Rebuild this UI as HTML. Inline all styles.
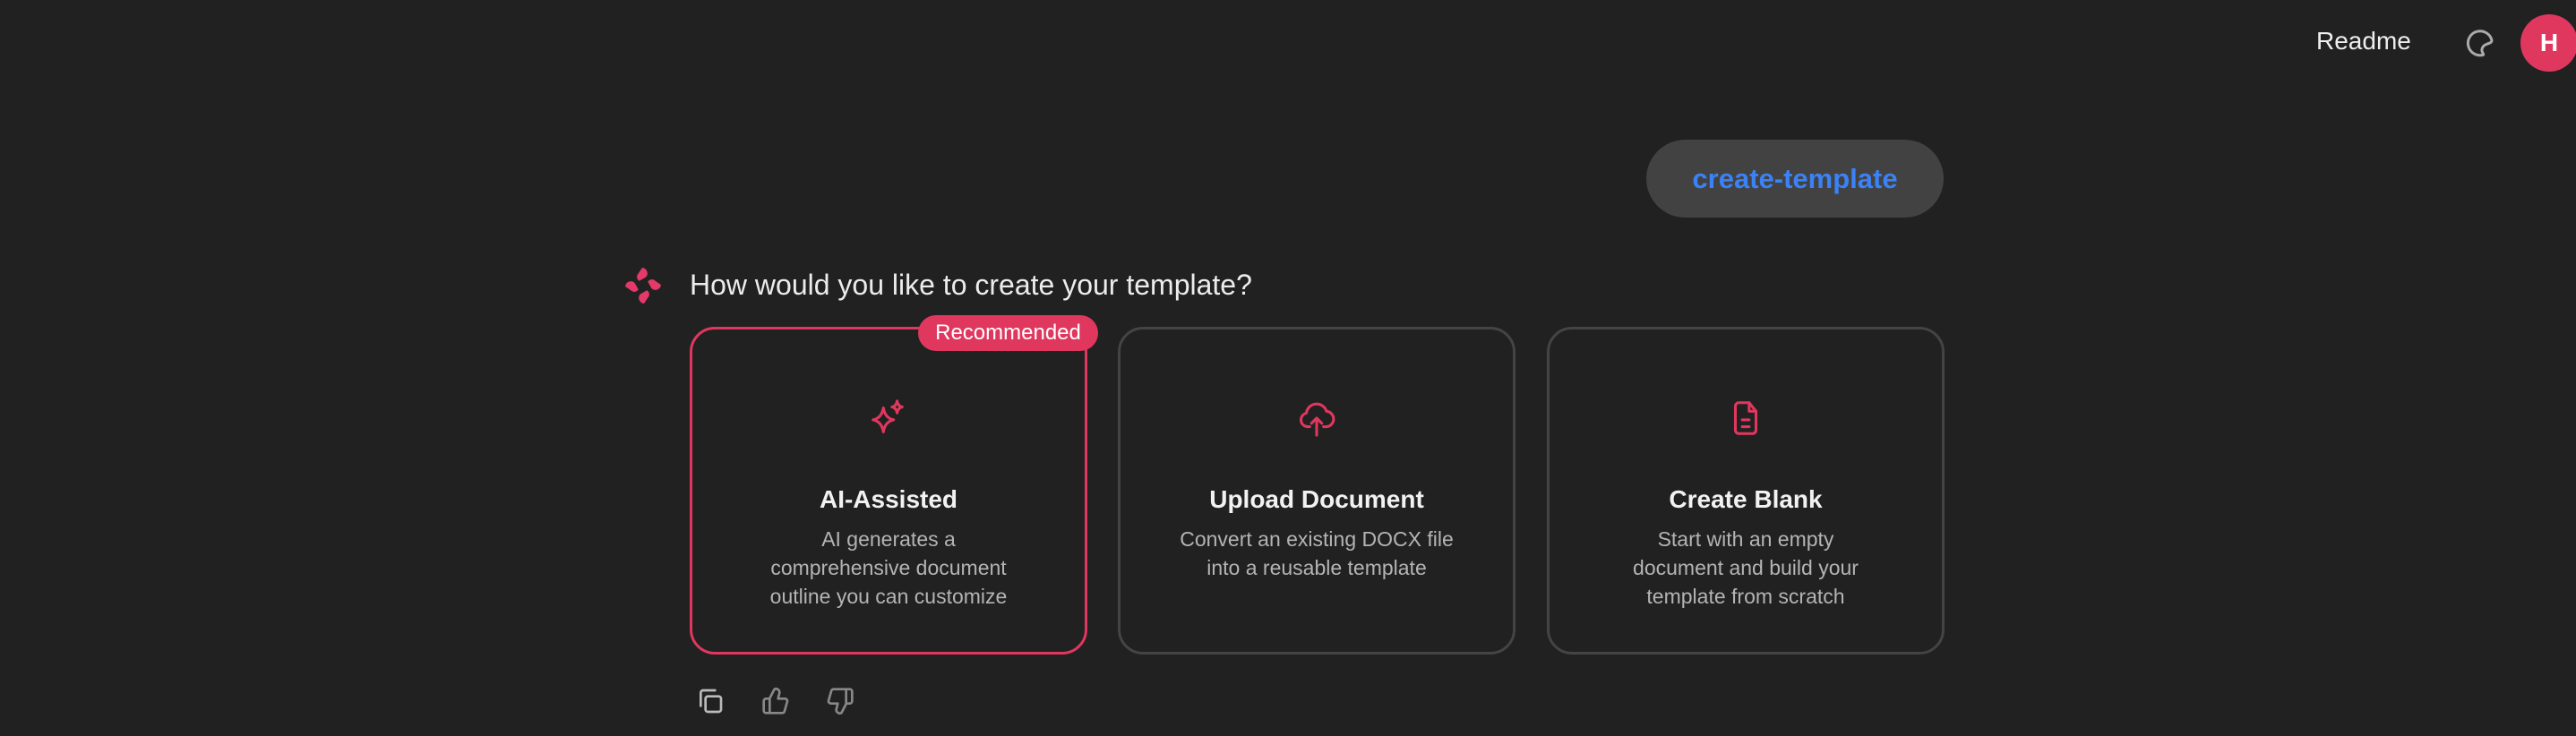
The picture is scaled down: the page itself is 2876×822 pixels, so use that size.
<!DOCTYPE html>
<html><head><meta charset="utf-8"><style>
*{margin:0;padding:0;box-sizing:border-box}
html,body{width:2876px;height:822px;background:#212121;overflow:hidden;font-family:"Liberation Sans",sans-serif;color:#ececec}
.abs{position:absolute}
.pill{left:1838px;top:156px;width:332px;height:87px;border-radius:44px;background:#424242;color:#3b82f6;font-weight:bold;font-size:31px;display:flex;align-items:center;justify-content:center}
.card{top:365px;width:444px;height:366px;border:3px solid #444;border-radius:28px;text-align:center}
.card.sel{border-color:#e0375f}
.card svg{position:absolute;left:50%;top:76px;transform:translateX(-50%)}
.card h3{position:absolute;left:0;right:0;top:174px;font-size:28px;font-weight:bold;color:#f2f2f2}
.card p{position:absolute;left:10px;right:10px;top:218px;font-size:23px;line-height:32px;color:#b4b4b4;white-space:nowrap}
.badge{left:1025px;top:352px;width:201px;height:40px;border-radius:20px;background:#e0375f;color:#fff;font-size:24px;display:flex;align-items:center;justify-content:center}
</style></head><body>
<div class="abs" style="left:2586px;top:30px;font-size:28px;color:#eee">Readme</div>
<svg class="abs" style="left:2752px;top:30px" width="36" height="36" viewBox="0 0 24 24" fill="none" stroke="#aaa" stroke-width="2" stroke-linecap="round" stroke-linejoin="round"><path d="M20 10A9 9 0 1 0 13 21c1 0 1-1 0-2-1-2 0-5 3-6 2-1 4-1 4-3z"/></svg>
<div class="abs" style="left:2814px;top:16px;width:64px;height:64px;border-radius:50%;background:#e0375f;color:#fff;font-weight:bold;font-size:28px;display:flex;align-items:center;justify-content:center">H</div>
<div class="abs pill">create-template</div>
<svg class="abs" style="left:697px;top:298px" width="42" height="42" viewBox="0 0 40 40" fill="#e33a6a"><path d="M19 1a6 6 0 0 1 4 10l-7 4a5 5 0 0 1-1-8z"/><path d="M39 19a6 6 0 0 1-10 4l-4-7a5 5 0 0 1 8-1z"/><path d="M21 39a6 6 0 0 1-4-10l7-4a5 5 0 0 1 1 8z"/><path d="M1 21a6 6 0 0 1 10-4l4 7a5 5 0 0 1-8 1z"/></svg>
<div class="abs" style="left:770px;top:300px;font-size:32px;color:#ececec">How would you like to create your template?</div>
<div class="abs card sel" style="left:770px">
<svg width="46" height="46" viewBox="0 0 24 24" fill="none" stroke="#e0375f" stroke-width="1.6" stroke-linejoin="round"><path d="M9 6Q10 12 15 13Q10 14 9 20Q8 14 3 13Q8 12 9 6Z"/><path d="M17 2Q17.5 5 20 5.5Q17.5 6 17 9Q16.5 6 14 5.5Q16.5 5 17 2Z"/></svg>
<h3>AI-Assisted</h3><p>AI generates a<br>comprehensive document<br>outline you can customize</p></div>
<div class="abs badge">Recommended</div>
<div class="abs card" style="left:1248px">
<svg width="46" height="46" viewBox="0 0 24 24" fill="none" stroke="#e0375f" stroke-width="1.6" stroke-linecap="round" stroke-linejoin="round"><path d="M8 17H7a4 4 0 0 1-1-7.9A6 6 0 0 1 17.7 8 4.5 4.5 0 0 1 17 17h-1"/><path d="M12 12v10M9 15l3-3 3 3"/></svg>
<h3>Upload Document</h3><p>Convert an existing DOCX file<br>into a reusable template</p></div>
<div class="abs card" style="left:1727px">
<svg width="46" height="46" viewBox="0 0 24 24" fill="none" stroke="#e0375f" stroke-width="1.6" stroke-linecap="round" stroke-linejoin="round"><path d="M14 3H8a2 2 0 0 0-2 2v14a2 2 0 0 0 2 2h8a2 2 0 0 0 2-2V8z"/><path d="M14 3v5h4M10 13h4M10 17h4"/></svg>
<h3>Create Blank</h3><p>Start with an empty<br>document and build your<br>template from scratch</p></div>
<svg class="abs" style="left:777px;top:767px" width="32" height="32" viewBox="0 0 24 24" fill="none" stroke="#bbb" stroke-width="2" stroke-linecap="round" stroke-linejoin="round"><rect x="8" y="8" width="13" height="13" rx="2"/><path d="M4 16V5a2 2 0 0 1 2-2h10"/></svg>
<svg class="abs" style="left:850px;top:767px" width="32" height="32" viewBox="0 0 24 24" fill="none" stroke="#888" stroke-width="2" stroke-linecap="round" stroke-linejoin="round"><path d="M7 10v11M15 5.9L14 10h5.8a2 2 0 0 1 1.9 2.5l-2.3 8A2 2 0 0 1 17.5 22H4a2 2 0 0 1-2-2v-8a2 2 0 0 1 2-2h2.8L11 2a3 3 0 0 1 4 3.9z"/></svg>
<svg class="abs" style="left:922px;top:767px" width="32" height="32" viewBox="0 0 24 24" fill="none" stroke="#888" stroke-width="2" stroke-linecap="round" stroke-linejoin="round"><path d="M17 14V3M9 18.1L10 14H4.2a2 2 0 0 1-1.9-2.5l2.3-8A2 2 0 0 1 6.5 2H20a2 2 0 0 1 2 2v8a2 2 0 0 1-2 2h-2.8L13 22a3 3 0 0 1-4-3.9z"/></svg>
</body></html>
